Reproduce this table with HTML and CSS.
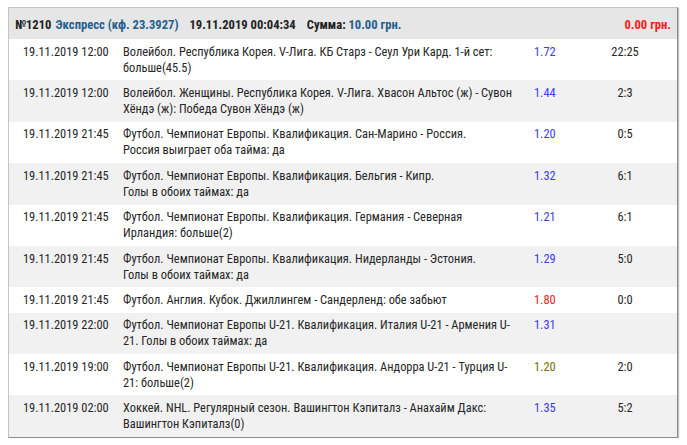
FILE: index.html
```html
<!DOCTYPE html>
<html lang="ru">
<head>
<meta charset="utf-8">
<link rel="stylesheet" href="styles.css">
</head>
<body>
<div class="panel">
  <div class="head">
    <div class="head-left">
      <span class="num">№1210</span>
      <span class="type">Экспресс (кф. 23.3927)</span>
      <span class="when">19.11.2019 00:04:34</span>
      <span class="sum">Сумма: <span class="type">10.00 грн.</span></span>
    </div>
    <div class="win">0.00 грн.</div>
  </div>
  <div class="rows">
    <div class="row">
      <div class="date">19.11.2019 12:00</div>
      <div class="desc">Волейбол. Республика Корея. V-Лига. КБ Старз - Сеул Ури Кард. 1-й сет: больше(45.5)</div>
      <div class="odd blue">1.72</div>
      <div class="score">22:25</div>
    </div>
    <div class="row">
      <div class="date">19.11.2019 12:00</div>
      <div class="desc">Волейбол. Женщины. Республика Корея. V-Лига. Хвасон Альтос (ж) - Сувон Хёндэ (ж): Победа Сувон Хёндэ (ж)</div>
      <div class="odd blue">1.44</div>
      <div class="score">2:3</div>
    </div>
    <div class="row">
      <div class="date">19.11.2019 21:45</div>
      <div class="desc">Футбол. Чемпионат Европы. Квалификация. Сан-Марино - Россия.<br>Россия выиграет оба тайма: да</div>
      <div class="odd blue">1.20</div>
      <div class="score">0:5</div>
    </div>
    <div class="row">
      <div class="date">19.11.2019 21:45</div>
      <div class="desc">Футбол. Чемпионат Европы. Квалификация. Бельгия - Кипр.<br>Голы в обоих таймах: да</div>
      <div class="odd blue">1.32</div>
      <div class="score">6:1</div>
    </div>
    <div class="row">
      <div class="date">19.11.2019 21:45</div>
      <div class="desc">Футбол. Чемпионат Европы. Квалификация. Германия - Северная Ирландия: больше(2)</div>
      <div class="odd blue">1.21</div>
      <div class="score">6:1</div>
    </div>
    <div class="row">
      <div class="date">19.11.2019 21:45</div>
      <div class="desc">Футбол. Чемпионат Европы. Квалификация. Нидерланды - Эстония.<br>Голы в обоих таймах: да</div>
      <div class="odd blue">1.29</div>
      <div class="score">5:0</div>
    </div>
    <div class="row">
      <div class="date">19.11.2019 21:45</div>
      <div class="desc">Футбол. Англия. Кубок. Джиллингем - Сандерленд: обе забьют</div>
      <div class="odd red">1.80</div>
      <div class="score">0:0</div>
    </div>
    <div class="row">
      <div class="date">19.11.2019 22:00</div>
      <div class="desc">Футбол. Чемпионат Европы U-21. Квалификация. Италия U-21 - Армения U-21. Голы в обоих таймах: да</div>
      <div class="odd blue">1.31</div>
      <div class="score"></div>
    </div>
    <div class="row">
      <div class="date">19.11.2019 19:00</div>
      <div class="desc">Футбол. Чемпионат Европы U-21. Квалификация. Андорра U-21 - Турция U-21: больше(2)</div>
      <div class="odd olive">1.20</div>
      <div class="score">2:0</div>
    </div>
    <div class="row">
      <div class="date">19.11.2019 02:00</div>
      <div class="desc">Хоккей. NHL. Регулярный сезон. Вашингтон Кэпиталз - Анахайм Дакс: Вашингтон Кэпиталз(0)</div>
      <div class="odd blue">1.35</div>
      <div class="score">5:2</div>
    </div>
  </div>
</div>
</body>
</html>
```
FILE: styles.css
```css
html, body {
  margin: 0;
  padding: 0;
  background: #fff;
}
body {
  padding: 7px 9px 0 8px;
  font-family: Roboto, "Liberation Sans", sans-serif;
  font-stretch: 75%;
  font-size: 12.4px;
  color: #262626;
}
.panel {
  width: 668px;
  border: 1px solid #c4c4c4;
  border-right-color: #8c8c8c;
  border-bottom-color: #8c8c8c;
  box-shadow: 1px 1px 1px rgba(0,0,0,0.25);
}
.head {
  display: flex;
  justify-content: space-between;
  align-items: center;
  height: 31px;
  padding: 0 6px 0 6px;
  background: #e6e6e6;
  font-weight: bold;
  font-size: 12.6px;
  color: #222;
}
.head-left {
  display: flex;
  gap: 11px;
  padding-top: 2px;
}
.head-left .type { color: #245f8f; }
.num { margin-right: -7px; }
.win {
  color: #ff1a1a;
  padding-top: 2px;
}
.rows .row:nth-child(even) { background: #f1f1f1; }
.row {
  display: grid;
  grid-template-columns: 100px 411px 61px 60px 1fr;
  padding: 4.7px 0 4.7px 14px;
  line-height: 16px;
}
.desc { padding-right: 18px; }
.score { text-align: center; }
.odd.blue { color: #3a3af0; }
.odd.red { color: #f02020; }
.odd.olive { color: #707000; }
```
